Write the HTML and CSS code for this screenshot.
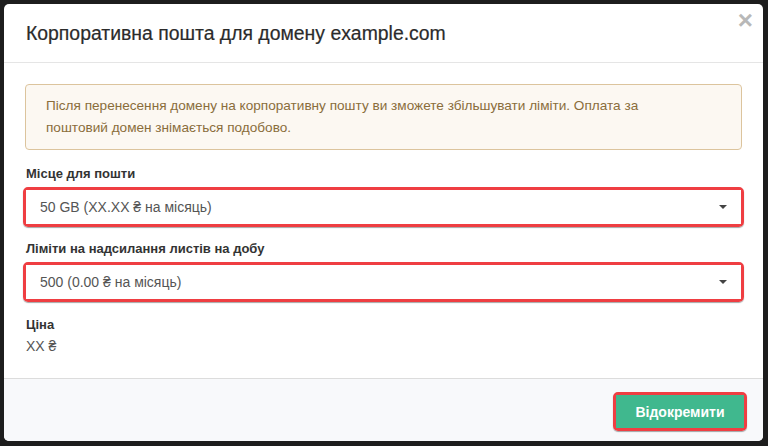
FILE: index.html
```html
<!DOCTYPE html>
<html lang="uk">
<head>
<meta charset="utf-8">
<link rel="stylesheet" href="styles.css">
</head>
<body>
<div class="modal">
  <div class="modal-header">
    <h4 class="modal-title">Корпоративна пошта для домену example.com</h4>
    <span class="close">×</span>
  </div>
  <div class="modal-body">
    <div class="alert">Після перенесення домену на корпоративну пошту ви зможете збільшувати ліміти. Оплата за поштовий домен знімається подобово.</div>
    <div class="field">
      <div class="label">Місце для пошти</div>
      <div class="hl">
        <div class="select"><span>50 GB (XX.XX ₴ на місяць)</span><span class="caret"></span></div>
      </div>
    </div>
    <div class="field">
      <div class="label">Ліміти на надсилання листів на добу</div>
      <div class="hl">
        <div class="select"><span>500 (0.00 ₴ на місяць)</span><span class="caret"></span></div>
      </div>
    </div>
    <div class="field price">
      <div class="label">Ціна</div>
      <div class="value">XX ₴</div>
    </div>
  </div>
  <div class="modal-footer">
    <div class="btn-hl"><button class="btn">Відокремити</button></div>
  </div>
</div>
</body>
</html>
```
FILE: styles.css
```css
* { box-sizing: border-box; }
html, body { margin: 0; }
body {
  background: #1d1d1d;
  padding: 4px;
  font-family: "Liberation Sans", Arial, sans-serif;
  font-size: 14px;
  color: #555;
}
.modal {
  width: 759px;
  height: 437px;
  background: #fff;
  border-radius: 5px;
  overflow: hidden;
  display: flex;
  flex-direction: column;
}
.modal-header {
  height: 59px;
  flex: none;
  border-bottom: 1px solid #e5e5e5;
  display: flex;
  align-items: center;
  padding: 0 14px 0 22px;
  position: relative;
}
.modal-title {
  margin: 0;
  font-size: 19.4px;
  font-weight: normal;
  color: #2b2b2b;
  -webkit-text-stroke: 0.2px #2b2b2b;
}
.close {
  position: absolute;
  right: 10px;
  top: 3px;
  font-size: 26px;
  line-height: 26px;
  color: #b8b8b8;
  font-weight: bold;
  font-family: "Liberation Sans", Arial, sans-serif;
}
.modal-body {
  flex: 1;
  padding: 21px 21px 0 21px;
}
.alert {
  background: #fcf8f2;
  border: 1px solid #dcc49d;
  border-radius: 4px;
  color: #8a6d3b;
  padding: 10px 40px 10px 20px;
  line-height: 22px;
  font-size: 13.6px;
}
.field { margin-top: 14px; }
.field + .field { margin-top: 12px; }
.label {
  font-weight: bold;
  font-size: 13px;
  color: #333;
  line-height: 20px;
  padding-left: 1px;
  margin-bottom: 3px;
}
.hl {
  margin-left: -2px;
  margin-right: -2px;
  border: 3px solid #ef3e42;
  border-radius: 5px;
  box-shadow: 0 1px 1px rgba(0,0,0,0.35);
}
.select {
  height: 34px;
  background: #fff;
  display: flex;
  align-items: center;
  justify-content: space-between;
  padding: 0 14px 0 14px;
  color: #555;
  font-size: 14px;
}
.caret {
  width: 0;
  height: 0;
  border-left: 4px solid transparent;
  border-right: 4px solid transparent;
  border-top: 4px solid #444;
}
.field.price { margin-top: 13px; }
.price .label { margin-bottom: 0; }
.value {
  line-height: 22px;
  color: #555;
  padding-left: 1px;
}
.modal-footer {
  flex: none;
  height: 63px;
  background: #f8f9fb;
  border-top: 1px solid #dcdcdc;
  display: flex;
  justify-content: flex-end;
  align-items: flex-start;
  padding: 13px 16px 0 0;
}
.btn-hl {
  border: 3px solid #ef3e42;
  border-radius: 5px;
  box-shadow: 0 1px 1px rgba(0,0,0,0.35);
}
.btn {
  display: block;
  width: 128px;
  height: 33px;
  border: 0;
  background: #40b88e;
  color: #fff;
  font-family: "Liberation Sans", Arial, sans-serif;
  font-weight: bold;
  font-size: 14px;
  padding: 0;
}
```
